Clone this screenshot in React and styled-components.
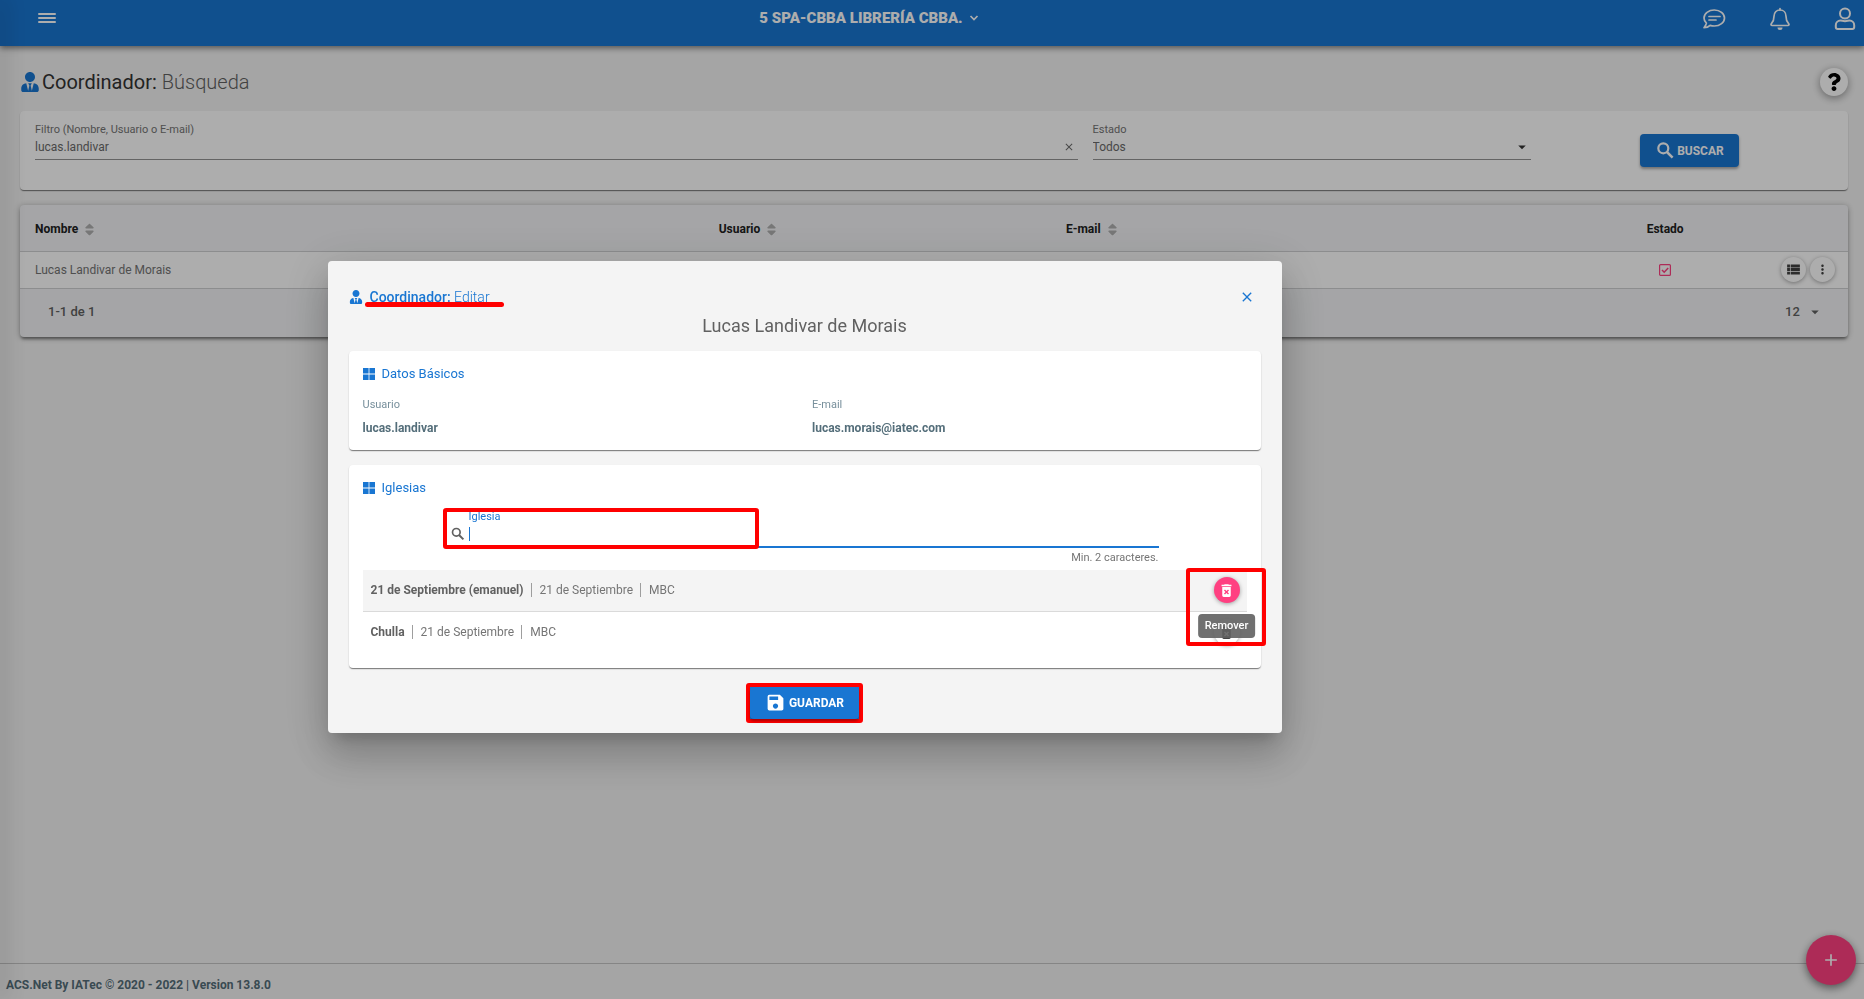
import React, { useState } from 'react';
import styled, { createGlobalStyle, css } from 'styled-components';
import { FaUserTie, FaQuestion, FaSort } from 'react-icons/fa';
import {
  MdSave,
  MdDeleteForever,
  MdViewList,
  MdMoreVert,
  MdArrowDropDown,
  MdAdd,
  MdClose,
} from 'react-icons/md';

const GlobalStyle = createGlobalStyle`
  *, *::before, *::after {
    box-sizing: border-box;
  }

  body {
    margin: 0;
    background: #f4f4f4;
    color: #616161;
    font-family: Roboto, "Liberation Sans", sans-serif;
    font-size: 12px;
  }

  button, input, select {
    font-family: inherit;
    font-size: inherit;
    color: inherit;
  }

  button {
    padding: 0;
    border: none;
    background: none;
    cursor: pointer;
  }

  svg {
    display: block;
    flex: none;
  }
`;

const Page = styled.div`
  display: flex;
  flex-direction: column;
  min-height: 100vh;
`;

const Drawer = styled.div`
  position: fixed;
  top: 0;
  bottom: 0;
  left: 0;
  width: 0;
  z-index: 2;
  box-shadow: 0 0 24px 5px rgba(0, 0, 0, 0.2);
`;

const TopBar = styled.header`
  display: grid;
  grid-template-columns: 1fr auto 1fr 126px;
  align-items: start;
  height: 46px;
  background: #1976d2;
  color: #fff;
  box-shadow: 0 2px 6px rgba(0, 0, 0, 0.5);
  z-index: 1;
`;

const MenuButton = styled.button`
  width: 18px;
  margin: 13px 0 0 38px;

  span {
    display: block;
    height: 2px;
    margin-bottom: 2px;
    background: #fff;
    border-radius: 1px;
  }
`;

const Unit = styled.button`
  display: flex;
  align-items: center;
  gap: 6px;
  padding-top: 10px;
  line-height: 16px;
  font-size: 15px;
  font-weight: 900;
`;

const TopActions = styled.nav`
  grid-column: 3 / span 2;
  display: flex;
  justify-content: flex-end;
  gap: 43px;
  padding: 7px 8px 0 0;
`;

const TitleRow = styled.div`
  display: flex;
  align-items: center;
  justify-content: space-between;
  padding: 22px 16px 15px 20px;
`;

const Title = styled.h1`
  display: flex;
  align-items: center;
  gap: 2px;
  margin: 0;
  font-size: 20px;
  font-weight: 400;
  line-height: 28px;
  color: #333;

  svg {
    color: #1976d2;
  }

  small {
    font-size: inherit;
    font-weight: 300;
    color: #616161;
  }
`;

const roundButton = css`
  display: flex;
  align-items: center;
  justify-content: center;
  flex: none;
  width: ${props => props.$size}px;
  height: ${props => props.$size}px;
  border-radius: 50%;
`;

const HelpButton = styled.button`
  ${roundButton}
  background: #fff;
  color: #000;
  box-shadow: 0 2px 8px rgba(0, 0, 0, 0.4);
`;

const IconButton = styled.button`
  ${roundButton}
  background: ${props => (props.$active ? '#ff4081' : '#fff')};
  color: ${props => (props.$active ? '#fff' : '#424242')};
  box-shadow: 0 1px 4px rgba(0, 0, 0, 0.35);
`;

const Card = styled.section`
  background: #fff;
  border-radius: 4px;
  box-shadow: 0 2px 1px -1px rgba(0, 0, 0, 0.3), 0 1px 1px rgba(0, 0, 0, 0.2),
    0 1px 2px rgba(0, 0, 0, 0.12);
`;

const FilterCard = styled(Card)`
  display: grid;
  grid-template-columns: 7fr 3fr 2fr;
  margin: 0 16px 15px 20px;
  padding: 12px 0 30px 15px;
`;

const Field = styled.div`
  margin-right: 15px;
  border-bottom: 1px solid #949494;
`;

const FieldLabel = styled.label`
  display: block;
  font-size: 11px;
  line-height: 14px;
  color: #757575;
`;

const FieldRow = styled.div`
  display: flex;
  align-items: center;
  height: 22px;
  padding-bottom: 3px;
  color: #6b6b6b;
`;

const TextInput = styled.input`
  flex: 1;
  min-width: 0;
  padding: 0;
  border: none;
  outline: none;
  background: transparent;
`;

const Select = styled.select`
  flex: 1;
  min-width: 0;
  padding: 0;
  border: none;
  outline: none;
  appearance: none;
  background: transparent;
`;

const ClearButton = styled.button`
  margin-right: 3px;
`;

const FilterAction = styled.div`
  display: flex;
  justify-content: center;
  align-items: start;
  height: 36px;
  padding: 11px 15px 0 0;
`;

const PrimaryButton = styled.button`
  display: flex;
  align-items: center;
  gap: ${props => props.$gap || 0}px;
  height: ${props => props.$height}px;
  padding: 0 15px;
  border-radius: 4px;
  background: #1976d2;
  color: #fff;
  font-size: 12px;
  font-weight: 700;
  box-shadow: 0 2px 3px rgba(0, 0, 0, 0.35);
`;

const TableCard = styled(Card)`
  margin: 0 16px 0 20px;
  overflow: hidden;
  background: #f3f4f6;
  box-shadow: 0 3px 3px -1px rgba(0, 0, 0, 0.4), 0 1px 6px rgba(0, 0, 0, 0.3);
`;

const Table = styled.table`
  width: 100%;
  table-layout: fixed;
  border-collapse: collapse;

  th,
  td {
    padding: 0 0 0 15px;
    text-align: left;
    border-bottom: 1px solid #cfd0d2;
  }

  th {
    height: 46px;
    padding-top: 3px;
    font-size: 12px;
    font-weight: 700;
    color: #212121;
  }

  th:nth-child(4) {
    padding-left: 0;
  }

  td {
    height: 37px;
    background: #fff;
    color: #757575;
  }
`;

const Column = styled.col`
  width: ${props => props.$width};
`;

const SortLabel = styled.span`
  display: flex;
  align-items: center;
  justify-content: ${props => (props.$center ? 'center' : 'flex-start')};
  gap: 4px;

  svg {
    color: #b0b0b0;
  }
`;

const CenteredCell = styled.td`
  && {
    padding: 0;
    color: #ff4081;
  }

  svg {
    margin: 0 auto;
  }
`;

const RowActions = styled.div`
  display: flex;
  gap: 4px;
  padding-left: 24px;
`;

const Pager = styled.div`
  display: flex;
  align-items: center;
  justify-content: space-between;
  height: 48px;
  padding: 0 24px 2px 28px;
  font-size: 13px;
  font-weight: 500;
`;

const PageSize = styled.label`
  display: flex;
  align-items: center;

  select {
    width: 21px;
    flex: none;
    font-weight: 500;
  }
`;

const Footer = styled.footer`
  margin-top: auto;
  height: 36px;
  padding: 0 6px;
  border-top: 1px solid #c4c4c4;
  font-size: 12px;
  font-weight: 700;
  line-height: 42px;
  color: #546e7a;
`;

const Fab = styled.button`
  ${roundButton}
  position: fixed;
  right: 8px;
  bottom: 14px;
  background: #ff4081;
  color: #fff;
  box-shadow: 0 3px 8px rgba(0, 0, 0, 0.5);
`;

const Backdrop = styled.div`
  position: fixed;
  inset: 0;
  z-index: 10;
  display: flex;
  align-items: center;
  justify-content: center;
  padding: 0 255px 6px 0;
  background: rgba(0, 0, 0, 0.32);
`;

const Dialog = styled.div`
  width: 954px;
  max-width: 100%;
  padding: 20px 21px 10px;
  border-radius: 4px;
  background: #f4f4f4;
  box-shadow: 0 11px 15px -7px rgba(0, 0, 0, 0.2), 0 24px 38px 3px rgba(0, 0, 0, 0.14),
    0 9px 46px 8px rgba(0, 0, 0, 0.12);
`;

const DialogHeader = styled.div`
  display: flex;
  align-items: center;
  justify-content: space-between;
  height: 33px;
  padding-right: 6px;
  color: #1976d2;
`;

const DialogTitle = styled.h2`
  display: flex;
  align-items: center;
  gap: 7px;
  margin: 0;
  font-size: 14px;
  font-weight: 500;
  line-height: 20px;

  small {
    font-size: inherit;
    font-weight: 300;
  }
`;

const Underlined = styled.span`
  position: relative;

  &::after {
    content: '';
    position: absolute;
    left: -5px;
    right: -14px;
    bottom: 0;
    height: 5px;
    border-radius: 3px;
    background: #ff0000;
  }
`;

const PersonName = styled.p`
  margin: 0 0 13px;
  font-size: 18px;
  line-height: 24px;
  text-align: center;
`;

const DialogCard = styled(Card)`
  margin-bottom: 15px;
  padding: 14px 14px ${props => props.$bottom}px;
`;

const SectionTitle = styled.h3`
  display: flex;
  align-items: center;
  gap: 7px;
  margin: 0;
  font-size: 13px;
  font-weight: 400;
  line-height: 18px;
  color: #1976d2;
`;

const Details = styled.dl`
  display: grid;
  grid-template-columns: 1fr 1fr;
  column-gap: 15px;
  margin: 13px 0 0;
`;

const DetailItem = styled.div`
  dt {
    font-size: 11px;
    line-height: 18px;
    color: #78909c;
  }

  dd {
    margin: 4px 0 0;
    font-size: 12px;
    font-weight: 700;
    line-height: 20px;
    color: #546e7a;
  }
`;

const ChurchSearch = styled.div`
  position: relative;
  margin: 13px 88px 0 83px;
`;

const ChurchField = styled.div`
  padding-left: 4px;
  border-bottom: 2px solid #1976d2;

  label {
    padding-left: 19px;
    color: #1976d2;
  }
`;

const ChurchRow = styled.div`
  display: flex;
  align-items: center;
  height: 22px;
  padding-bottom: 2px;
`;

const Caret = styled.span`
  width: 1px;
  height: 14px;
  margin-left: 3px;
  background: #1976d2;
`;

const Hint = styled.p`
  margin: 0;
  padding: 2px 0 5px;
  font-size: 11px;
  line-height: 15px;
  text-align: right;
  color: #757575;
`;

const Highlight = styled.span`
  position: absolute;
  top: ${props => props.$top};
  right: ${props => props.$right};
  bottom: ${props => props.$bottom};
  left: ${props => props.$left};
  z-index: 2;
  border: 4px solid #ff0000;
  border-radius: 3px;
  pointer-events: none;
`;

const ChurchList = styled.ul`
  margin: 0;
  padding: 0;
  list-style: none;
`;

const ChurchItem = styled.li`
  display: flex;
  align-items: center;
  justify-content: space-between;
  height: 42px;
  padding: 0 7px 0 8px;
  font-size: 12px;
  background: ${props => (props.$hovered ? '#f4f4f4' : '#fff')};
  border-bottom: 1px solid ${props => (props.$hovered ? '#dadada' : 'transparent')};
`;

const ChurchText = styled.span`
  display: flex;
  align-items: center;
  line-height: 14px;
  color: #757575;

  strong {
    color: #616161;
  }

  span {
    margin-left: 7px;
    padding-left: 8px;
    border-left: 1px solid #9e9e9e;
  }
`;

const RemoveSlot = styled.span`
  position: relative;
`;

const Tooltip = styled.span`
  position: absolute;
  top: 37px;
  left: 50%;
  z-index: 1;
  padding: 0 7px;
  border-radius: 4px;
  background: rgba(97, 97, 97, 0.9);
  color: #fff;
  font-size: 11px;
  font-weight: 500;
  line-height: 24px;
  transform: translateX(-50%);
`;

const DialogActions = styled.div`
  display: flex;
  justify-content: center;
`;

const ActionMark = styled.div`
  border: 4px solid #ff0000;
  border-radius: 3px;
  background: #1976d2;
`;

const SearchIcon = ({ size }) => (
  <svg width={size} height={size} viewBox="0 0 21 21" fill="none" stroke="currentColor" strokeWidth="2.2">
    <circle cx="8.3" cy="8.300" r="5" />
    <path d="M11.800 11.800l5.800 5.800" strokeWidth="2.600" />
  </svg>
);

const ChatIcon = () => (
  <svg width="24" height="22" viewBox="0 0 24 22" fill="none" stroke="currentColor" strokeWidth="1.7">
    <path d="M12.3 2C6.6 2 2 5.5 2 10c0 2 .9 3.800 2.400 5.200C4.200 16.800 3 18.500 2 19.700c2.500 0 4.700-.9 6.100-2.300 1.300.4 2.700.6 4.200.6C18 18 22.500 14.400 22.500 10S18 2 12.300 2z" strokeLinejoin="round" />
    <path d="M7 8.500h11M7 12h7" strokeLinecap="round" />
  </svg>
);

const BellIcon = () => (
  <svg width="22" height="24" viewBox="0 0 22 24" fill="none" stroke="currentColor" strokeWidth="1.7">
    <path d="M11 3C7.400 3 5 5.600 5 9.200c0 5-1.600 6.300-2.700 7.500-.6.700-.2 1.800.8 1.800h15.800c1 0 1.400-1.100.8-1.800C18.600 15.500 17 14.200 17 9.200 17 5.600 14.600 3 11 3z" strokeLinejoin="round" />
    <path d="M11 3V1.500" strokeLinecap="round" />
    <path d="M8.500 20.500a2.500 2.500 0 0 0 5 0z" fill="currentColor" stroke="none" />
  </svg>
);

const UserIcon = () => (
  <svg width="22" height="24" viewBox="0 0 22 24" fill="none" stroke="currentColor" strokeWidth="2">
    <circle cx="11" cy="6.500" r="5" />
    <path d="M6.500 13.500c1.500 0 2.500.7 4.500.7s3-.7 4.500-.7c2.600 0 4.700 2.100 4.700 4.700v1.900c0 1-.8 1.900-1.900 1.900H3.700c-1 0-1.900-.8-1.900-1.900v-1.900c0-2.600 2.100-4.700 4.700-4.700z" />
  </svg>
);

const ChevronIcon = () => (
  <svg width="10" height="8" viewBox="0 0 10 8" fill="none" stroke="currentColor" strokeWidth="1.700">
    <path d="M1.500 2L5 5.500 8.500 2" />
  </svg>
);

const CheckIcon = () => (
  <svg width="12" height="12" viewBox="0 0 12 12" fill="none" stroke="currentColor" strokeWidth="1.200">
    <rect x="0.600" y="0.600" width="10.800" height="10.800" rx="1" />
    <path d="M3 6l2.200 2.200L9.200 4" strokeWidth="1.500" />
  </svg>
);

const GridIcon = () => (
  <svg width="12" height="12" viewBox="0 0 12 12" fill="currentColor">
    <path d="M0 0h5.600v5.600H0zM6.400 0H12v5.600H6.400zM0 6.400h5.600V12H0zM6.400 6.400H12V12H6.400z" />
  </svg>
);

const churches = [
  { id: 1, name: '21 de Septiembre (emanuel)', district: '21 de Septiembre', field: 'MBC' },
  { id: 2, name: 'Chulla', district: '21 de Septiembre', field: 'MBC' },
];

const App = () => {
  const [filter, setFilter] = useState('lucas.landivar');
  const [church, setChurch] = useState('');
  const [hoveredId, setHoveredId] = useState(1);

  return (
    <>
      <GlobalStyle />
      <Page>
        <Drawer />
        <TopBar>
          <MenuButton aria-label="Menú">
            <span />
            <span />
            <span />
          </MenuButton>
          <Unit>
            5 SPA-CBBA LIBRERÍA CBBA.
            <ChevronIcon />
          </Unit>
          <TopActions>
            <button aria-label="Mensajes"><ChatIcon /></button>
            <button aria-label="Notificaciones"><BellIcon /></button>
            <button aria-label="Perfil"><UserIcon /></button>
          </TopActions>
        </TopBar>

        <TitleRow>
          <Title>
            <FaUserTie size={20} />
            <span>Coordinador: <small>Búsqueda</small></span>
          </Title>
          <HelpButton $size={28} aria-label="Ayuda"><FaQuestion size={18} /></HelpButton>
        </TitleRow>

        <FilterCard>
          <Field>
            <FieldLabel htmlFor="filter">Filtro (Nombre, Usuario o E-mail)</FieldLabel>
            <FieldRow>
              <TextInput id="filter" value={filter} onChange={(e) => setFilter(e.target.value)} />
              <ClearButton aria-label="Limpiar" onClick={() => setFilter('')}>
                <MdClose size={12} />
              </ClearButton>
            </FieldRow>
          </Field>
          <Field>
            <FieldLabel htmlFor="status">Estado</FieldLabel>
            <FieldRow>
              <Select id="status" defaultValue="Todos">
                <option>Todos</option>
              </Select>
              <MdArrowDropDown size={18} color="#333" />
            </FieldRow>
          </Field>
          <FilterAction>
            <PrimaryButton $height={33} $gap={1}>
              <SearchIcon size={21} />
              BUSCAR
            </PrimaryButton>
          </FilterAction>
        </FilterCard>

        <TableCard>
          <Table>
            <colgroup>
              <Column $width="37.4%" />
              <Column $width="19%" />
              <Column $width="28.6%" />
              <Column $width="10%" />
              <Column $width="5%" />
            </colgroup>
            <thead>
              <tr>
                <th><SortLabel>Nombre <FaSort size={15} /></SortLabel></th>
                <th><SortLabel>Usuario <FaSort size={15} /></SortLabel></th>
                <th><SortLabel>E-mail <FaSort size={15} /></SortLabel></th>
                <th><SortLabel $center>Estado</SortLabel></th>
                <th />
              </tr>
            </thead>
            <tbody>
              <tr>
                <td>Lucas Landivar de Morais</td>
                <td />
                <td />
                <CenteredCell><CheckIcon /></CenteredCell>
                <CenteredCell>
                  <RowActions>
                    <IconButton $size={25} aria-label="Detalles"><MdViewList size={17} /></IconButton>
                    <IconButton $size={25} aria-label="Más"><MdMoreVert size={15} /></IconButton>
                  </RowActions>
                </CenteredCell>
              </tr>
            </tbody>
          </Table>
          <Pager>
            <span>1-1 de 1</span>
            <PageSize>
              <Select aria-label="Filas" defaultValue="12">
                <option>12</option>
              </Select>
              <MdArrowDropDown size={18} />
            </PageSize>
          </Pager>
        </TableCard>

        <Footer>ACS.Net By IATec © 2020 - 2022 | Version 13.8.0</Footer>
        <Fab $size={50} aria-label="Agregar"><MdAdd size={20} /></Fab>
      </Page>

      <Backdrop>
        <Dialog role="dialog" aria-modal="true">
          <DialogHeader>
            <DialogTitle>
              <FaUserTie size={14} />
              <Underlined>Coordinador: <small>Editar</small></Underlined>
            </DialogTitle>
            <button aria-label="Cerrar"><MdClose size={16} /></button>
          </DialogHeader>
          <PersonName>Lucas Landivar de Morais</PersonName>

          <DialogCard $bottom={12}>
            <SectionTitle><GridIcon />Datos Básicos</SectionTitle>
            <Details>
              <DetailItem>
                <dt>Usuario</dt>
                <dd>lucas.landivar</dd>
              </DetailItem>
              <DetailItem>
                <dt>E-mail</dt>
                <dd>lucas.morais@iatec.com</dd>
              </DetailItem>
            </Details>
          </DialogCard>

          <DialogCard $bottom={14}>
            <SectionTitle><GridIcon />Iglesias</SectionTitle>
            <ChurchSearch>
              <ChurchField>
                <FieldLabel htmlFor="church">Iglesia</FieldLabel>
                <ChurchRow>
                  <SearchIcon size={16} />
                  <Caret />
                  <TextInput id="church" value={church} onChange={(e) => setChurch(e.target.value)} />
                </ChurchRow>
              </ChurchField>
              <Hint>Min. 2 caracteres.</Hint>
              <Highlight $top="-2px" $left="-3px" $right="400px" $bottom="21px" />
            </ChurchSearch>
            <ChurchList>
              {churches.map(item => (
                <ChurchItem
                  key={item.id}
                  $hovered={item.id === hoveredId}
                  onMouseEnter={() => setHoveredId(item.id)}
                >
                  <ChurchText>
                    <strong>{item.name}</strong>
                    <span>{item.district}</span>
                    <span>{item.field}</span>
                  </ChurchText>
                  <RemoveSlot>
                    <IconButton $size={26} $active={item.id === hoveredId} aria-label="Remover">
                      <MdDeleteForever size={17} />
                    </IconButton>
                    {item.id === hoveredId && (
                      <>
                        <Tooltip role="tooltip">Remover</Tooltip>
                        <Highlight $top="-9px" $left="-28px" $right="-26px" $bottom="-43px" />
                      </>
                    )}
                  </RemoveSlot>
                </ChurchItem>
              ))}
            </ChurchList>
          </DialogCard>

          <DialogActions>
            <ActionMark>
              <PrimaryButton $height={32} $gap={3}>
                <MdSave size={21} />
                GUARDAR
              </PrimaryButton>
            </ActionMark>
          </DialogActions>
        </Dialog>
      </Backdrop>
    </>
  );
};

export default App;
